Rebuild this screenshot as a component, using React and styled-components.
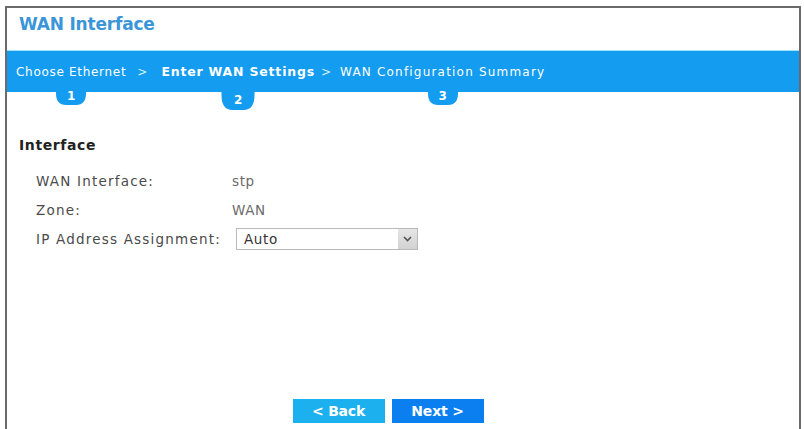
import React from "react";
import styled, { createGlobalStyle } from "styled-components";

const GlobalStyle = createGlobalStyle`
  html, body {
    margin: 0;
    padding: 0;
    background: #fff;
    overflow: hidden;
  }
  body {
    font-family: "DejaVu Sans", "Open Sans", sans-serif;
  }
`;

const Page = styled.div`
  width: 804px;
  height: 429px;
  padding: 6px 3px 0 5px;
  box-sizing: border-box;
`;

const Frame = styled.div`
  height: 100%;
  box-sizing: border-box;
  border: 2px solid #6a6a6a;
  border-bottom: none;
  display: flex;
  flex-direction: column;
`;

const Header = styled.div`
  height: 42px;
  padding: 6px 0 0 12px;
  box-sizing: border-box;
  color: #3b95d8;
  font-size: 17px;
  font-weight: bold;
  letter-spacing: -0.2px;
`;

const StepBar = styled.div`
  height: 42px;
  background: #139cf0;
  border-top: 1px solid #9fe0ff;
  box-sizing: border-box;
  display: flex;
  align-items: center;
  padding-left: 9px;
  color: #fff;
`;

const Step = styled.div`
  position: relative;
  font-weight: ${(p) => (p.$active ? "bold" : "normal")};
  font-size: ${(p) => (p.$active ? "12.5px" : "12px")};
  letter-spacing: ${(p) => p.$spacing};
  white-space: nowrap;
`;

const Chevron = styled.span`
  margin: ${(p) => p.$margin};
  color: #d8f1ff;
  font-size: 12px;
`;

const Tab = styled.div`
  position: absolute;
  left: 50%;
  top: 21px;
  transform: translateX(-50%);
  width: ${(p) => (p.$active ? "44px" : "40px")};
  height: ${(p) => (p.$active ? "25px" : "19px")};
  display: flex;
  align-items: center;
  justify-content: center;
  color: #fff;
  font-weight: bold;
  font-size: 12px;
  letter-spacing: 0;
`;

const TabShape = styled.svg`
  position: absolute;
  inset: 0;
  width: 100%;
  height: 100%;
`;

const TabNum = styled.span`
  position: relative;
  margin-top: ${(p) => (p.$active ? "4px" : "2px")};
`;

const Body = styled.div`
  flex: 1;
  padding: 45px 0 0 12px;
  display: flex;
  flex-direction: column;
`;

const SectionTitle = styled.div`
  font-weight: bold;
  font-size: 14px;
  letter-spacing: 0.6px;
  color: #222;
  margin-bottom: 13px;
`;

const Row = styled.div`
  display: flex;
  align-items: center;
  height: 29px;
  padding-left: 17px;
  font-size: 13.5px;
  letter-spacing: 1.2px;
  color: #4a4a4a;
`;

const Label = styled.div`
  width: 196px;
`;

const Value = styled.div`
  color: #6b6b6b;
  letter-spacing: 0.6px;
`;

const Select = styled.div`
  margin-left: 4px;
  width: 182px;
  height: 22px;
  box-sizing: border-box;
  border: 1px solid #b9b9b9;
  background: #fff;
  display: flex;
  align-items: stretch;
`;

const SelectText = styled.div`
  flex: 1;
  padding-left: 7px;
  display: flex;
  align-items: center;
  color: #333;
  font-size: 13.5px;
  letter-spacing: 0.6px;
`;

const SelectArrow = styled.div`
  width: 19px;
  background: linear-gradient(#e6e6e6, #d2d2d2);
  display: flex;
  align-items: center;
  justify-content: center;
`;

const Footer = styled.div`
  margin-top: auto;
  display: flex;
  justify-content: center;
  gap: 7px;
  padding: 0 30px 6px 0;
  margin-left: -12px;
`;

const Button = styled.button`
  width: 92px;
  height: 24px;
  border: none;
  background: ${(p) => (p.$primary ? "#0b7ff0" : "#1cb0ef")};
  color: #fff;
  font-family: "DejaVu Sans", sans-serif;
  font-weight: bold;
  font-size: 14px;
  letter-spacing: -0.2px;
  padding: 0;
`;

const steps = [
  { label: "Choose Ethernet", num: 1, spacing: "0.7px", after: "0 14px 0 11px" },
  { label: "Enter WAN Settings", num: 2, active: true, spacing: "0.8px", after: "0 9px 0 6px" },
  { label: "WAN Configuration Summary", num: 3, spacing: "1.2px" },
];

function StepTab({ num, active }) {
  return (
    <Tab $active={active}>
      <TabShape viewBox="0 0 40 20" preserveAspectRatio="none">
        <path
          d="M0 0 Q5 0 5 5 L5 8 Q5 20 15 20 L25 20 Q35 20 35 8 L35 5 Q35 0 40 0 Z"
          fill="#139cf0"
        />
      </TabShape>
      <TabNum $active={active}>{num}</TabNum>
    </Tab>
  );
}

export default function App() {
  return (
    <Page>
      <GlobalStyle />
      <Frame>
        <Header>WAN Interface</Header>
        <StepBar>
          {steps.map((s) => (
            <React.Fragment key={s.num}>
              <Step $active={s.active} $spacing={s.spacing}>
                {s.label}
                <StepTab num={s.num} active={s.active} />
              </Step>
              {s.after && <Chevron $margin={s.after}>&gt;</Chevron>}
            </React.Fragment>
          ))}
        </StepBar>
        <Body>
          <SectionTitle>Interface</SectionTitle>
          <Row>
            <Label>WAN Interface:</Label>
            <Value>stp</Value>
          </Row>
          <Row>
            <Label>Zone:</Label>
            <Value>WAN</Value>
          </Row>
          <Row>
            <Label>IP Address Assignment:</Label>
            <Select>
              <SelectText>Auto</SelectText>
              <SelectArrow>
                <svg width="9" height="6" viewBox="0 0 9 6">
                  <path d="M1 1 L4.5 4.5 L8 1" stroke="#555" strokeWidth="1.6" fill="none" />
                </svg>
              </SelectArrow>
            </Select>
          </Row>
          <Footer>
            <Button>&lt; Back</Button>
            <Button $primary>Next &gt;</Button>
          </Footer>
        </Body>
      </Frame>
    </Page>
  );
}
